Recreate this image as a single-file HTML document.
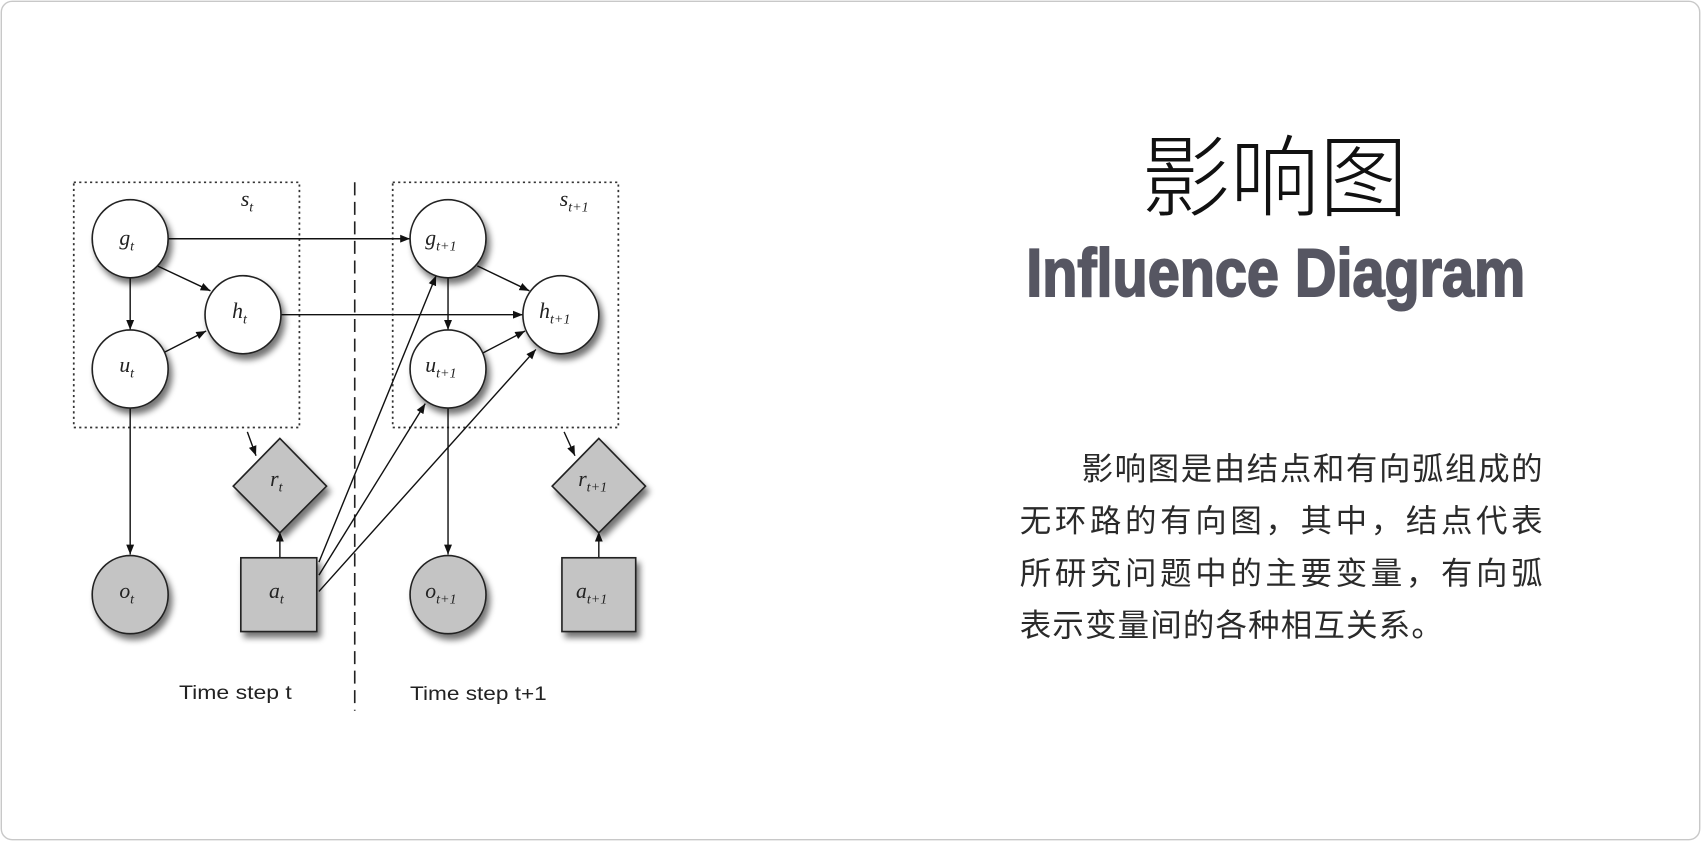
<!DOCTYPE html>
<html><head><meta charset="utf-8">
<style>
html,body{margin:0;padding:0;background:#fff;}
svg{display:block;}
.lab{font-family:"Liberation Serif",serif;font-style:italic;fill:#222;}
</style></head>
<body>
<svg width="1701" height="841" viewBox="0 0 1568 775" preserveAspectRatio="none" xmlns="http://www.w3.org/2000/svg">
<defs>
<marker id="ar" viewBox="0 0 10 10" refX="10" refY="5" markerWidth="7" markerHeight="7" orient="auto"><path d="M0,1 L10,5 L0,9 z" fill="#111"/></marker>
<filter id="sh" x="-40%" y="-40%" width="190%" height="190%"><feGaussianBlur in="SourceAlpha" stdDeviation="3"/><feOffset dx="3" dy="5"/><feComponentTransfer><feFuncA type="linear" slope="0.55"/></feComponentTransfer><feMerge><feMergeNode/><feMergeNode in="SourceGraphic"/></feMerge></filter>
</defs>
<rect x="1.2" y="1.2" width="1565.6" height="772.6" rx="10" fill="#fff" stroke="#c8c8c8" stroke-width="1.3"/>

<rect x="68" y="168" width="208" height="226" fill="none" stroke="#333" stroke-width="1.6" stroke-dasharray="2,3"/>
<rect x="362" y="168" width="208" height="226" fill="none" stroke="#333" stroke-width="1.6" stroke-dasharray="2,3"/>
<line x1="327" y1="168" x2="327" y2="655" stroke="#222" stroke-width="1.5" stroke-dasharray="12,6"/>

<g stroke="#111" stroke-width="1.3" marker-end="url(#ar)" fill="none">
<line x1="155" y1="220" x2="378" y2="220"/>
<line x1="145" y1="245" x2="194" y2="268"/>
<line x1="120" y1="256" x2="120" y2="304"/>
<line x1="145" y1="328" x2="190" y2="305"/>
<line x1="259" y1="290" x2="482" y2="290"/>
<line x1="120" y1="376" x2="120" y2="511"/>
<line x1="228" y1="398" x2="236" y2="420"/>
<line x1="258" y1="514" x2="258" y2="490"/>
<line x1="294" y1="518" x2="402" y2="254"/>
<line x1="294" y1="530" x2="392" y2="372"/>
<line x1="294" y1="545" x2="494" y2="322"/>
<line x1="440" y1="245" x2="488" y2="268"/>
<line x1="413" y1="256" x2="413" y2="304"/>
<line x1="440" y1="328" x2="484" y2="305"/>
<line x1="413" y1="376" x2="413" y2="511"/>
<line x1="520" y1="398" x2="530" y2="420"/>
<line x1="552" y1="514" x2="552" y2="490"/>
</g>

<g stroke="#222" stroke-width="1.5" filter="url(#sh)">
<ellipse cx="120" cy="220" rx="35" ry="36" fill="#fff"/>
<ellipse cx="224" cy="290" rx="35" ry="36" fill="#fff"/>
<ellipse cx="120" cy="340" rx="35" ry="36" fill="#fff"/>
<ellipse cx="120" cy="548" rx="35" ry="36" fill="#c4c4c4"/>
<rect x="222" y="514" width="70" height="68" fill="#c4c4c4"/>
<path d="M258,404 L301,448 L258,491 L215,448 Z" fill="#c4c4c4"/>
<ellipse cx="413" cy="220" rx="35" ry="36" fill="#fff"/>
<ellipse cx="517" cy="290" rx="35" ry="36" fill="#fff"/>
<ellipse cx="413" cy="340" rx="35" ry="36" fill="#fff"/>
<ellipse cx="413" cy="548" rx="35" ry="36" fill="#c4c4c4"/>
<rect x="518" y="514" width="68" height="68" fill="#c4c4c4"/>
<path d="M552,404 L595,448 L552,491 L509,448 Z" fill="#c4c4c4"/>
</g>

<g class="lab" font-size="20">
<text x="110" y="226">g<tspan font-size="13" dy="5">t</tspan></text>
<text x="214" y="293">h<tspan font-size="13" dy="5">t</tspan></text>
<text x="110" y="343">u<tspan font-size="13" dy="5">t</tspan></text>
<text x="110" y="551">o<tspan font-size="13" dy="5">t</tspan></text>
<text x="248" y="551">a<tspan font-size="13" dy="5">t</tspan></text>
<text x="249" y="448">r<tspan font-size="13" dy="5">t</tspan></text>
<text x="222" y="190">s<tspan font-size="13" dy="5">t</tspan></text>
<text x="392" y="226">g<tspan font-size="13" dy="5">t+1</tspan></text>
<text x="497" y="293">h<tspan font-size="13" dy="5">t+1</tspan></text>
<text x="392" y="343">u<tspan font-size="13" dy="5">t+1</tspan></text>
<text x="392" y="551">o<tspan font-size="13" dy="5">t+1</tspan></text>
<text x="531" y="551">a<tspan font-size="13" dy="5">t+1</tspan></text>
<text x="533" y="448">r<tspan font-size="13" dy="5">t+1</tspan></text>
<text x="516" y="190">s<tspan font-size="13" dy="5">t+1</tspan></text>
</g>
<g font-family="Liberation Sans, sans-serif" font-size="18" fill="#222">
<text x="165" y="644" textLength="104" lengthAdjust="spacingAndGlyphs">Time step t</text>
<text x="378" y="645" textLength="126" lengthAdjust="spacingAndGlyphs">Time step t+1</text>
</g>

<text x="1175" y="193" text-anchor="middle" font-family="Liberation Sans, Noto Sans CJK SC, sans-serif" font-weight="300" font-size="82" fill="#111">影响图</text>
<text x="946" y="273" font-family="Liberation Sans, sans-serif" font-weight="bold" font-size="62" fill="#565662" stroke="#565662" stroke-width="1.8" textLength="460" lengthAdjust="spacingAndGlyphs">Influence Diagram</text>
<g font-family="Liberation Sans, Noto Sans CJK SC, sans-serif" font-size="29" fill="#2a2a2a">
<text x="997" y="442" textLength="425">影响图是由结点和有向弧组成的</text>
<text x="940" y="490" textLength="482">无环路的有向图，其中，结点代表</text>
<text x="940" y="538" textLength="482">所研究问题中的主要变量，有向弧</text>
<text x="940" y="586" textLength="390">表示变量间的各种相互关系。</text>
</g>
</svg>
</body></html>
